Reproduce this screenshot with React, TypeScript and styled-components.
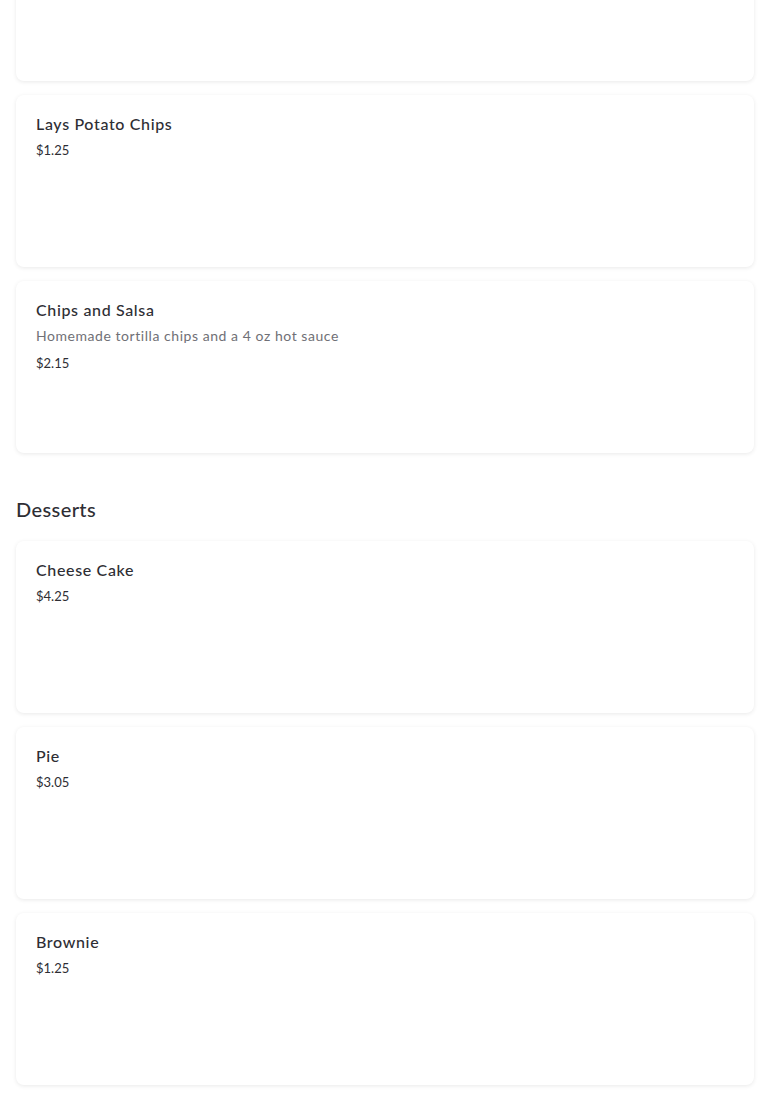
import React from "react";
import styled, { createGlobalStyle } from "styled-components";

type Item = { name?: string; price?: string; description?: string };
type Section = { title?: string; items: Item[] };

// first card is scrolled above the top of the view, only its bottom shows
const sections: Section[] = [
  {
    items: [
      {},
      { name: "Lays Potato Chips", price: "$1.25" },
      {
        name: "Chips and Salsa",
        price: "$2.15",
        description: "Homemade tortilla chips and a 4 oz hot sauce",
      },
    ],
  },
  {
    title: "Desserts",
    items: [
      { name: "Cheese Cake", price: "$4.25" },
      { name: "Pie", price: "$3.05" },
      { name: "Brownie", price: "$1.25" },
    ],
  },
];

const GlobalStyle = createGlobalStyle`
  html, body {
    margin: 0;
    padding: 0;
    background: #ffffff;
    font-family: Lato, "Noto Sans", "Liberation Sans", sans-serif;
    color: #2e2e34;
    overflow: hidden;
  }
`;

const Page = styled.main`
  display: flex;
  flex-direction: column;
  gap: 42px;
  padding: 0 16px 17px;
  margin-top: -91px;
`;

const MenuSection = styled.section`
  display: flex;
  flex-direction: column;
`;

const SectionTitle = styled.h2`
  margin: 0 0 18px;
  font-size: 20px;
  line-height: 28px;
  font-weight: 500;
  letter-spacing: 0.4px;
  color: #2e2e34;
`;

const CardList = styled.div`
  display: flex;
  flex-direction: column;
  gap: 14px;
`;

const Card = styled.article`
  height: 172px;
  box-sizing: border-box;
  padding: 18px 20px;
  background: #fff;
  border-radius: 8px;
  box-shadow: 0 1px 4px rgba(0, 0, 0, 0.09);
  display: flex;
  flex-direction: column;
  gap: 5px;
`;

const ItemName = styled.h3`
  margin: 0;
  font-size: 16px;
  line-height: 22px;
  font-weight: 500;
  letter-spacing: 0.65px;
  color: #2e2e34;
`;

const Description = styled.p`
  margin: 0;
  font-size: 14px;
  line-height: 20px;
  letter-spacing: 0.55px;
  color: #707076;
`;

const Price = styled.span<{ $shifted?: boolean }>`
  font-size: 13px;
  line-height: 20px;
  color: #2e2e34;
  margin-top: ${(p) => (p.$shifted ? "2px" : "0")};
`;

export default function App() {
  return (
    <>
      <GlobalStyle />
      <Page>
        {sections.map((s, i) => (
          <MenuSection key={i}>
            {s.title && <SectionTitle>{s.title}</SectionTitle>}
            <CardList>
              {s.items.map((item, j) => (
                <Card key={j}>
                  {item.name && <ItemName>{item.name}</ItemName>}
                  {item.description && <Description>{item.description}</Description>}
                  {item.price && <Price $shifted={!!item.description}>{item.price}</Price>}
                </Card>
              ))}
            </CardList>
          </MenuSection>
        ))}
      </Page>
    </>
  );
}
